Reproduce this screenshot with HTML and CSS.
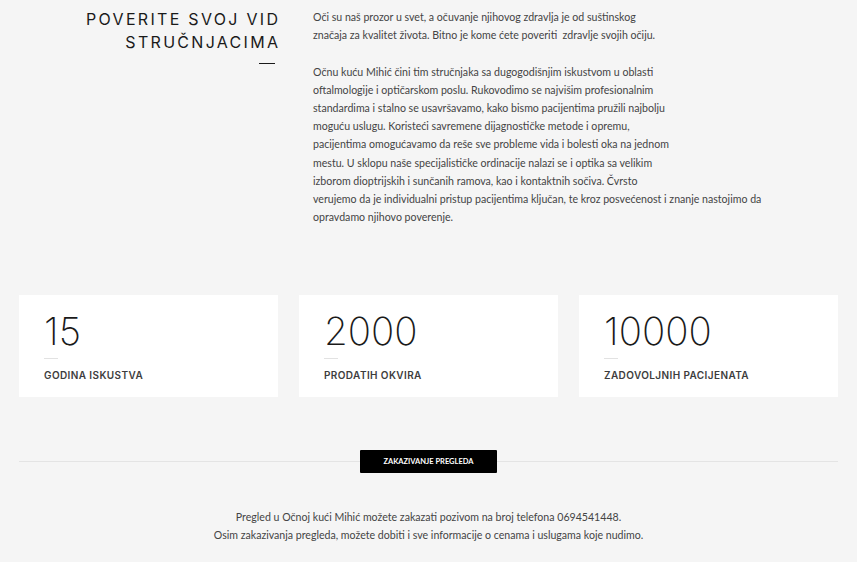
FILE: index.html
```html
<!DOCTYPE html>
<html lang="sr">
<head>
    <meta charset="UTF-8">
    <meta name="viewport" content="width=device-width, initial-scale=1.0">
    <title>Očna kuća Mihić</title>
    <link rel="stylesheet" href="styles.css">
</head>
<body>
    <section class="about">
        <div class="about-title">
            <h2>Poverite svoj vid<br>stručnjacima</h2>
            <span class="title-dash"></span>
        </div>
        <div class="about-text">
            <p>Oči su naš prozor u svet, a očuvanje njihovog zdravlja je od suštinskog<br>značaja za kvalitet života. Bitno je kome ćete poveriti&nbsp; zdravlje svojih očiju.</p>
            <p>Očnu kuću Mihić čini tim stručnjaka sa dugogodišnjim iskustvom u oblasti<br>oftalmologije i optičarskom poslu. Rukovodimo se najvišim profesionalnim<br>standardima i stalno se usavršavamo, kako bismo pacijentima pružili najbolju<br>moguću uslugu. Koristeći savremene dijagnostičke metode i opremu,<br>pacijentima omogućavamo da reše sve probleme vida i bolesti oka na jednom<br>mestu. U sklopu naše specijalističke ordinacije nalazi se i optika sa velikim<br>izborom dioptrijskih i sunčanih ramova, kao i kontaktnih sočiva. Čvrsto<br>verujemo da je individualni pristup pacijentima ključan, te kroz posvećenost i znanje nastojimo da<br>opravdamo njihovo poverenje.</p>
        </div>
    </section>

    <section class="stats">
        <div class="stat-card">
            <div class="stat-number">15</div>
            <span class="stat-dash"></span>
            <div class="stat-label">Godina iskustva</div>
        </div>
        <div class="stat-card">
            <div class="stat-number">2000</div>
            <span class="stat-dash"></span>
            <div class="stat-label">Prodatih okvira</div>
        </div>
        <div class="stat-card">
            <div class="stat-number">10000</div>
            <span class="stat-dash"></span>
            <div class="stat-label">Zadovoljnih pacijenata</div>
        </div>
    </section>

    <section class="booking">
        <div class="booking-divider">
            <a href="#" class="booking-button">Zakazivanje pregleda</a>
        </div>
        <p class="booking-text">Pregled u Očnoj kući Mihić možete zakazati pozivom na broj telefona 0694541448.<br>Osim zakazivanja pregleda, možete dobiti i sve informacije o cenama i uslugama koje nudimo.</p>
    </section>
</body>
</html>
```

FILE: styles.css
```css
* {
    margin: 0;
    padding: 0;
    box-sizing: border-box;
}

body {
    background: #f5f5f5;
    color: #333;
    font-family: "Lato", "Open Sans", sans-serif;
}

.about {
    display: grid;
    grid-template-columns: 278px 1fr;
    column-gap: 35px;
    padding-top: 8px;
}

.about-title {
    display: flex;
    flex-direction: column;
    align-items: flex-end;
}

.about-title h2 {
    font-family: "Inter", "Noto Sans", sans-serif;
    font-size: 16px;
    font-weight: 400;
    line-height: 23px;
    letter-spacing: 2.3px;
    margin-right: -2.3px;
    text-transform: uppercase;
    text-align: right;
    color: #1a1a1a;
}

.title-dash {
    width: 16px;
    height: 1px;
    background: #1a1a1a;
    margin-top: 9px;
    margin-right: 3px;
}

.about-text p {
    font-size: 10.6px;
    line-height: 18.2px;
    color: #444;
    white-space: nowrap;
    margin-bottom: 18.2px;
}

.stats {
    display: grid;
    grid-template-columns: repeat(3, 1fr);
    gap: 21px;
    padding: 0 19px;
    margin-top: 50px;
}

.stat-card {
    background: #fff;
    height: 102px;
    padding: 15px 25px 0;
}

.stat-number {
    font-family: "Inter", "Noto Sans", sans-serif;
    font-size: 38.5px;
    font-weight: 200;
    line-height: 42px;
    color: #1a1a1a;
}

.stat-dash {
    display: block;
    width: 14px;
    height: 1px;
    background: #e2e2e2;
    margin-top: 6px;
}

.stat-label {
    font-family: "Inter", "Noto Sans", sans-serif;
    font-size: 10px;
    font-weight: 600;
    letter-spacing: 0.4px;
    text-transform: uppercase;
    color: #3d3d3d;
    margin-top: 10px;
}

.booking {
    padding: 0 19px;
    margin-top: 53px;
}

.booking-divider {
    display: flex;
    justify-content: center;
    border-bottom: 1px solid #e4e4e4;
    height: 12px;
}

.booking-button {
    display: flex;
    align-items: center;
    justify-content: center;
    width: 137px;
    height: 23px;
    background: #000;
    color: #fff;
    text-decoration: none;
    font-family: "Lato", sans-serif;
    font-size: 7.5px;
    font-weight: 700;
    text-transform: uppercase;
    border-radius: 1px;
}

.booking-text {
    text-align: center;
    font-size: 10.6px;
    line-height: 18.2px;
    color: #444;
    margin-top: 46px;
}
```
